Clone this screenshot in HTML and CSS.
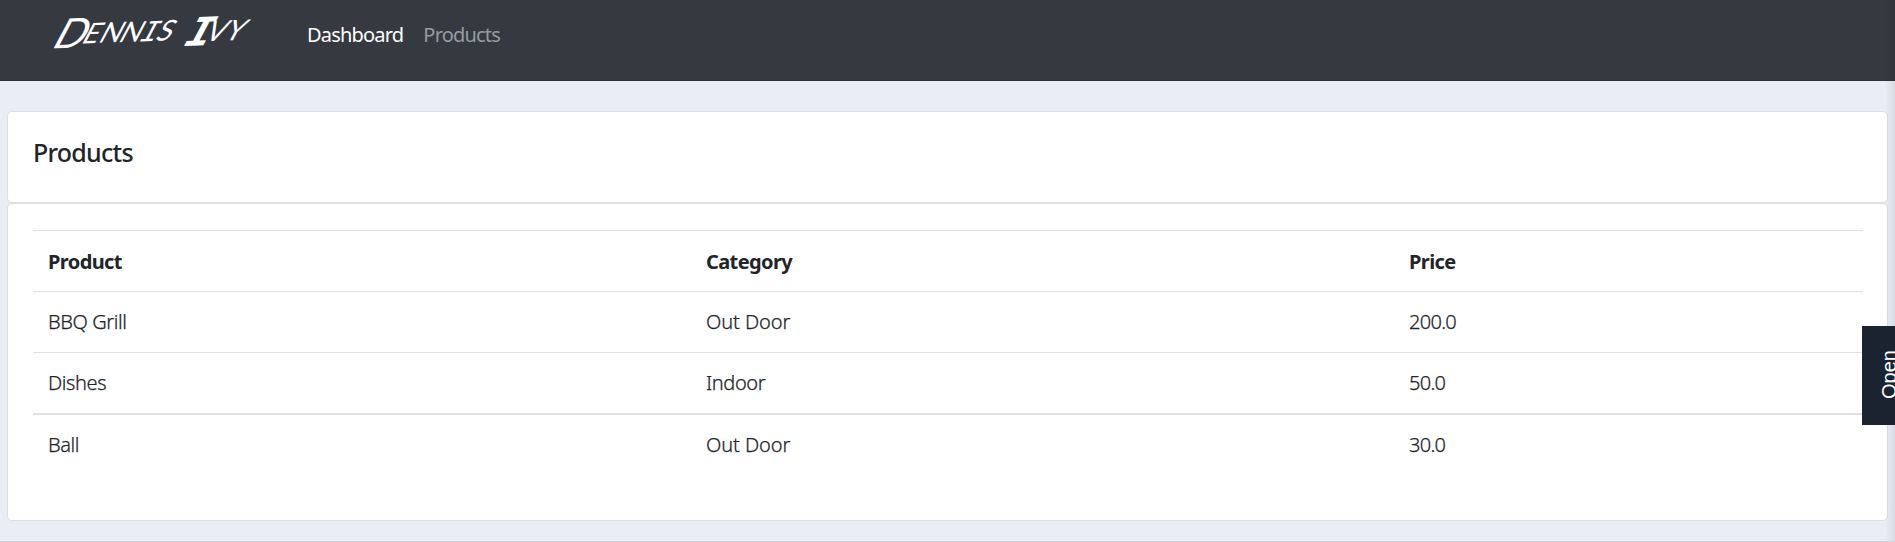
FILE: index.html
```html
<!DOCTYPE html>
<html lang="en">
<head>
<meta charset="utf-8">
<title>Products</title>
<link rel="stylesheet" href="styles.css">
</head>
<body>
<nav class="navbar">
  <a class="brand">
    <svg class="logo" width="255" height="60" viewBox="0 0 255 60" role="img" aria-label="Dennis Ivy">
      <g transform="translate(0 41) rotate(-2 150 0) skewX(-30)">
        <text class="logo-text"><tspan class="big" x="52" y="4">D</tspan><tspan x="80 97 117" y="0">ENN</tspan><tspan class="slab" x="137" y="0">I</tspan><tspan x="154" y="0">S </tspan><tspan class="slab heavy" x="184" y="6">I</tspan><tspan x="204 224" y="2">VY</tspan></text>
      </g>
    </svg>
  </a>
  <a class="nav-link active">Dashboard</a>
  <a class="nav-link products">Products</a>
</nav>
<main class="content">
  <section class="card heading-card"><h5 class="title">Products</h5></section>
  <section class="card table-card">
    <table class="table">
      <colgroup><col class="col-product"><col class="col-category"><col></colgroup>
      <thead><tr><th>Product</th><th>Category</th><th>Price</th></tr></thead>
      <tbody>
        <tr><td>BBQ Grill</td><td class="outdoor">Out Door</td><td class="price">200.0</td></tr>
        <tr><td>Dishes</td><td>Indoor</td><td class="price">50.0</td></tr>
        <tr class="last"><td>Ball</td><td class="outdoor">Out Door</td><td class="price">30.0</td></tr>
      </tbody>
    </table>
  </section>
</main>
<div class="edge-shadow"></div>
<button class="open-tab"><span class="open-label">Open</span></button>
</body>
</html>
```
FILE: styles.css
```css
* { box-sizing: border-box; }
body {
  margin: 0;
  height: 542px;
  overflow: hidden;
  position: relative;
  display: flex;
  flex-direction: column;
  background: #e9edf5;
  border-bottom: 1px solid #cfd3d9;
  color: #212529;
  font: 20px/30px "Noto Sans", "Open Sans", sans-serif;
}
.navbar {
  height: 81px;
  flex: none;
  display: flex;
  align-items: flex-start;
  background: #343a40;
  border-bottom: 1px solid #2f3338;
}
.brand { width: 255px; flex: none; }
.logo { display: block; overflow: visible; }
.logo-text { font: 400 28px Lato, sans-serif; fill: #fff; }
.big { font-size: 41px; }
.slab { font-family: "Liberation Mono", monospace; font-size: 30px; }
.heavy { font-size: 43px; font-weight: bold; }
.nav-link { padding: 20px 0 0 52px; color: #999c9f; letter-spacing: -0.8px; }
.nav-link.active { color: #fff; }
.nav-link.products { padding-left: 20px; }
.content { padding: 30px 7px 0; }
.card { background: #fff; border: 1px solid #dcdee1; border-radius: 5px; }
.heading-card { height: 92px; padding: 25px; }
.title { margin: 0; font-size: 25px; line-height: 30px; font-weight: 500; letter-spacing: -0.75px; color: #212529; }
.table-card { height: 318px; padding: 26px 24px 0 25px; }
.table { width: 1830px; table-layout: fixed; border-collapse: separate; border-spacing: 0; }
.col-product { width: 658px; }
.col-category { width: 703px; }
th, td { height: 61px; padding: 1px 15px 0; border-top: 1px solid #dee2e6; text-align: left; vertical-align: middle; letter-spacing: -0.6px; }
td { padding-top: 0; font-weight: 300; letter-spacing: -0.4px; -webkit-text-stroke: 0.25px #212529; }
.outdoor { letter-spacing: -0.1px; }
.price { letter-spacing: -0.7px; }
.last td { height: 62px; border-top-width: 2px; }
.edge-shadow { position: absolute; top: 0; right: 0; width: 10px; height: 100%; background: linear-gradient(to right, transparent, rgba(0, 0, 0, 0.08)); }
.open-tab {
  position: absolute;
  left: 1862px;
  top: 326px;
  width: 99px;
  height: 99px;
  padding: 3px 0 0 15px;
  border: 0;
  background: #1a232f;
  color: #fff;
  text-align: left;
  font: 20px/24px "Liberation Sans", Arial, sans-serif;
}
.open-label { display: inline-block; writing-mode: vertical-rl; transform: rotate(180deg); }
```
